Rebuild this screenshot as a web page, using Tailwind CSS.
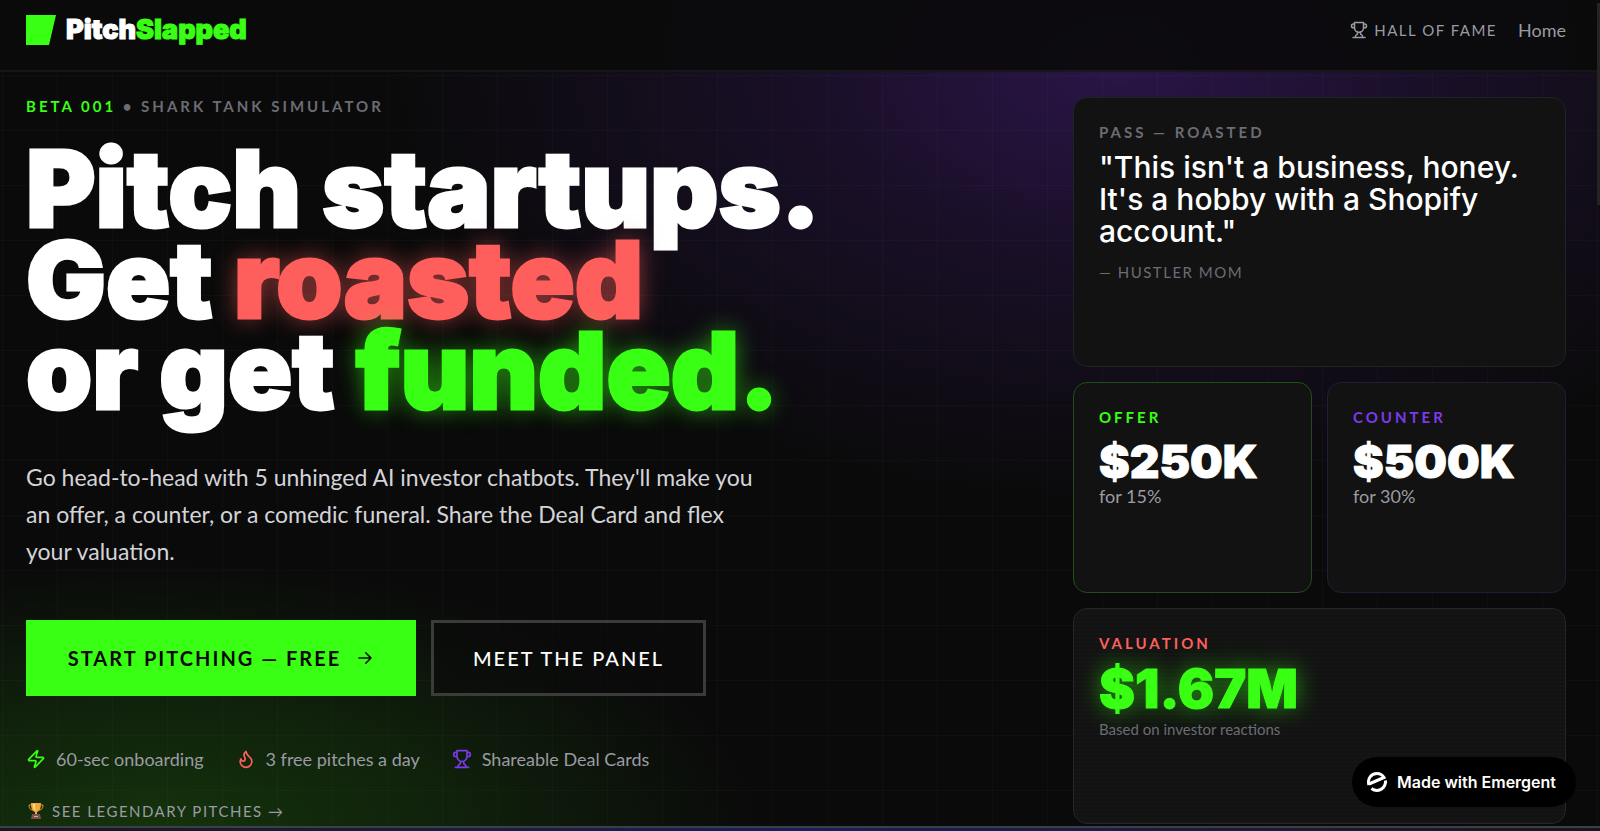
<!DOCTYPE html>
<html lang="en">
<head>
    <meta charset="UTF-8">
    <meta name="viewport" content="width=device-width, initial-scale=1.0">
    <title>PitchSlapped | Shark Tank Simulator</title>
    <script src="https://cdn.jsdelivr.net/npm/@tailwindcss/browser@4"></script>
    <style>
        body {
            font-family: 'Lato', 'Noto Sans', sans-serif;
        }
        .font-display {
            font-family: 'Inter', 'Noto Sans', sans-serif;
        }
        /* Thicken the heaviest display text */
        .font-display.font-black {
            -webkit-text-stroke: 1px currentColor;
        }
        h1.font-display.font-black {
            -webkit-text-stroke-width: 3px;
        }
        h1.font-display span {
            -webkit-text-stroke-color: currentColor;
        }

        /* Purple glow top right, green glow bottom left */
        .glow {
            background:
                radial-gradient(ellipse 740px 440px at 70% 8%, #2a1548 0%, rgba(42, 21, 72, 0.45) 45%, transparent 100%),
                radial-gradient(ellipse 600px 270px at 10% 100%, #14330c 0%, rgba(20, 51, 12, 0.55) 50%, transparent 100%);
        }
        .grid-lines {
            background-image:
                linear-gradient(to right, rgba(255, 255, 255, 0.02) 1px, transparent 1px),
                linear-gradient(to bottom, rgba(255, 255, 255, 0.02) 1px, transparent 1px);
            background-size: 55px 55px;
            background-position: 57px 20px;
        }
        .scanlines {
            background-image: repeating-linear-gradient(to bottom, rgba(255, 255, 255, 0.012) 0 2px, transparent 2px 4px);
        }
    </style>
</head>
<body class="bg-[#0a0a0a] text-white">
<div class="relative min-h-screen overflow-hidden flex flex-col">

    <!-- Background -->
    <div class="glow absolute inset-0"></div>
    <div class="grid-lines absolute inset-0"></div>

    <!-- Nav -->
    <header class="relative bg-[#0a0a0a]/90 border-b-2 border-white/5 h-[72px] pl-[26px] pr-[34px] pb-[10px] flex items-center justify-between">
        <a href="#" class="flex items-center gap-[10px]">
            <svg class="w-[30px] h-[30px]" viewBox="0 0 30 30" fill="#39ff14"><path d="M0 0H30L23 30H0Z"/></svg>
            <span class="font-display font-black text-[27px] leading-[30px]">Pitch<span class="text-[#39ff14]">Slapped</span></span>
        </a>
        <nav class="flex items-center gap-[21px] text-[#9b9ba3]">
            <a href="#" class="flex items-center gap-[6px] text-[15px] tracking-widest">
                <svg class="w-[18px] h-[18px]" viewBox="0 0 24 24" fill="none" stroke="currentColor" stroke-width="2" stroke-linecap="round" stroke-linejoin="round"><path d="M6 9H4.5a2.500 2.500 0 0 1 0-5H6M18 9h1.500a2.500 2.500 0 0 0 0-5H18M4 22h16M10 14.660V17c0 .55-.47.98-.97 1.210C7.850 18.750 7 20.240 7 22M14 14.660V17c0 .55.47.98.97 1.210C16.150 18.750 17 20.240 17 22M18 2H6v7a6 6 0 0 0 12 0V2Z"/></svg>
                HALL OF FAME
            </a>
            <a href="#" class="text-[18px]">Home</a>
        </nav>
    </header>

    <!-- Hero -->
    <main class="relative flex-1 flex justify-between pl-[26px] pt-[25px] pr-[34px]">
        <section class="flex flex-col items-start">
            <p class="text-[15px] leading-[18px] font-bold tracking-[3px] text-[#6c6c74]"><span class="text-[#39ff14]">BETA 001</span> • SHARK TANK SIMULATOR</p>
            <h1 class="font-display font-black text-[106px] leading-[91px] mt-[28px] whitespace-nowrap">
                Pitch startups.<br>
                Get <span class="text-[#ff5f5c] [text-shadow:0_0_24px_rgba(255,95,92,0.6)]">roasted</span><br>
                or get <span class="text-[#39ff14] [text-shadow:0_0_24px_rgba(57,255,20,0.6)]">funded.</span>
            </h1>
            <p class="text-[23px] leading-[37px] text-[#d4d4d8] mt-[43px] max-w-[740px]">Go head-to-head with 5 unhinged AI investor chatbots. They'll make you an offer, a counter, or a comedic funeral. Share the Deal Card and flex your valuation.</p>
            <div class="flex gap-[15px] mt-[50px]">
                <button class="flex items-center justify-center gap-[15px] h-[76px] w-[390px] bg-[#39ff14] text-[#0a0a0a] text-[20px] font-bold tracking-[2px]">
                    START PITCHING — FREE
                    <svg class="w-[18px] h-[18px]" viewBox="0 0 24 24" fill="none" stroke="currentColor" stroke-width="2" stroke-linecap="round" stroke-linejoin="round"><path d="M4 12h16M13 5l7 7-7 7"/></svg>
                </button>
                <button class="h-[76px] w-[275px] border-3 border-[#3b3b3b] bg-[#0a0a0a]/60 text-[20px] font-medium tracking-[2px]">MEET THE PANEL</button>
            </div>
            <ul class="flex gap-8 mt-[51px] text-[18px] leading-6 text-[#9b9ba3]">
                <li class="flex items-center gap-[10px]">
                    <svg class="w-5 h-5 text-[#39ff14]" viewBox="0 0 24 24" fill="none" stroke="currentColor" stroke-width="2" stroke-linecap="round" stroke-linejoin="round"><path d="M4 14a1 1 0 0 1-.78-1.630l9.900-10.200a.5.5 0 0 1 .86.46l-1.920 6.020A1 1 0 0 0 13 10h7a1 1 0 0 1 .78 1.630l-9.900 10.200a.5.5 0 0 1-.86-.46l1.920-6.020A1 1 0 0 0 11 14z"/></svg>
                    60-sec onboarding
                </li>
                <li class="flex items-center gap-[10px]">
                    <svg class="w-5 h-5 text-[#ff5f5c]" viewBox="0 0 24 24" fill="none" stroke="currentColor" stroke-width="2" stroke-linecap="round" stroke-linejoin="round"><path d="M8.500 14.500A2.500 2.500 0 0 0 11 12c0-1.380-.5-2-1-3-1.072-2.143-.224-4.054 2-6 .5 2.500 2 4.900 4 6.500 2 1.600 3 3.500 3 5.500a7 7 0 1 1-14 0c0-1.153.433-2.294 1-3a2.500 2.500 0 0 0 2.500 2.500z"/></svg>
                    3 free pitches a day
                </li>
                <li class="flex items-center gap-[10px]">
                    <svg class="w-5 h-5 text-[#7c3aed]" viewBox="0 0 24 24" fill="none" stroke="currentColor" stroke-width="2" stroke-linecap="round" stroke-linejoin="round"><path d="M6 9H4.500a2.500 2.500 0 0 1 0-5H6M18 9h1.500a2.500 2.500 0 0 0 0-5H18M4 22h16M10 14.660V17c0 .55-.47.98-.97 1.210C7.850 18.750 7 20.240 7 22M14 14.660V17c0 .55.47.98.97 1.210C16.150 18.750 17 20.240 17 22M18 2H6v7a6 6 0 0 0 12 0V2Z"/></svg>
                    Shareable Deal Cards
                </li>
            </ul>
            <a href="#" class="flex items-center gap-[6px] mt-[30px] text-[15px] leading-5 tracking-widest text-[#9b9ba3]">
                <svg class="w-5 h-4" viewBox="0 0 20 16"><path d="M5 2H3c0 3 1 5 4 5M15 2h2c0 3-1 5-4 5" fill="none" stroke="#d9902c"/><path d="M5 0h10c0 5-1 8-4 9v2H9V9C6 8 5 5 5 0z" fill="#f2a93b"/><path d="M7 1h2c0 3 0 5 1 7-2-1-3-3-3-7z" fill="#ffe08a"/><path d="M6 11h8l1 5H5z" fill="#7d4f52"/><path d="M8 13h4v1H8z" fill="#e0b070"/></svg>
                SEE LEGENDARY PITCHES →
            </a>
        </section>

        <!-- Deal cards -->
        <aside class="w-[493px] shrink-0 grid grid-cols-2 grid-rows-[270px_211px_216px] gap-[15px]">
            <article class="col-span-2 rounded-[14px] border border-[#222225] bg-[#121212] p-[25px]">
                <p class="text-[15px] leading-[18px] font-bold tracking-[3px] text-[#6c6c74]">PASS — ROASTED</p>
                <blockquote class="font-display font-medium text-[30px] leading-8 mt-[10px]">"This isn't a business, honey. It's a hobby with a Shopify account."</blockquote>
                <p class="text-[15px] leading-5 tracking-widest text-[#6c6c74] mt-[15px]">— HUSTLER MOM</p>
            </article>
            <article class="rounded-[14px] border border-[#1f5016] bg-[#121212] p-[25px]">
                <p class="text-[15px] leading-[18px] font-bold tracking-[3px] text-[#39ff14]">OFFER</p>
                <p class="font-display font-black text-[46px] leading-[46px] mt-3">$250K</p>
                <p class="text-[18px] leading-6 text-[#9b9ba3]">for 15%</p>
            </article>
            <article class="rounded-[14px] border border-[#251b38] bg-[#121212] p-[25px]">
                <p class="text-[15px] leading-[18px] font-bold tracking-[3px] text-[#7c3aed]">COUNTER</p>
                <p class="font-display font-black text-[46px] leading-[46px] mt-3">$500K</p>
                <p class="text-[18px] leading-6 text-[#9b9ba3]">for 30%</p>
            </article>
            <article class="scanlines col-span-2 rounded-[14px] border border-[#262626] bg-[#121212] p-[25px]">
                <p class="text-[15px] leading-[18px] font-bold tracking-[3px] text-[#ff5f5c]">VALUATION</p>
                <p class="font-display font-black text-[54px] leading-[54px] mt-[10px] text-[#39ff14] [text-shadow:0_0_24px_rgba(57,255,20,0.6)]">$1.67M</p>
                <p class="text-[15px] leading-5 text-[#6c6c74] mt-[3px]">Based on investor reactions</p>
            </article>
        </aside>
    </main>

    <!-- Top edge of the ticker below the hero -->
    <div class="relative h-[5px] border-t-2 border-[#3c3e48] bg-linear-to-r from-[#17171d] via-[#14205c] to-[#17171d]"></div>

    <!-- Emergent badge -->
    <a href="#" class="absolute right-6 bottom-6 h-[50px] w-[224px] rounded-full bg-black flex items-center pl-[15px] gap-[10px] font-display font-semibold text-[16px]">
        <svg class="w-5 h-5" viewBox="0 0 20 20" fill="none" stroke="#fff" stroke-width="3"><path d="M2 13C0 7 4 1.500 10 1.500c3 0 5.500 1.500 7 4L2 12"/><path d="M18.500 8.500C19 14 15 18.500 10 18.500c-2 0-4-.8-5.500-2"/></svg>
        Made with Emergent
    </a>

    <!-- Scroll thumb -->
    <div class="absolute right-0 top-[3px] w-[3px] h-[202px] bg-[#242424]"></div>
</div>
</body>
</html>
